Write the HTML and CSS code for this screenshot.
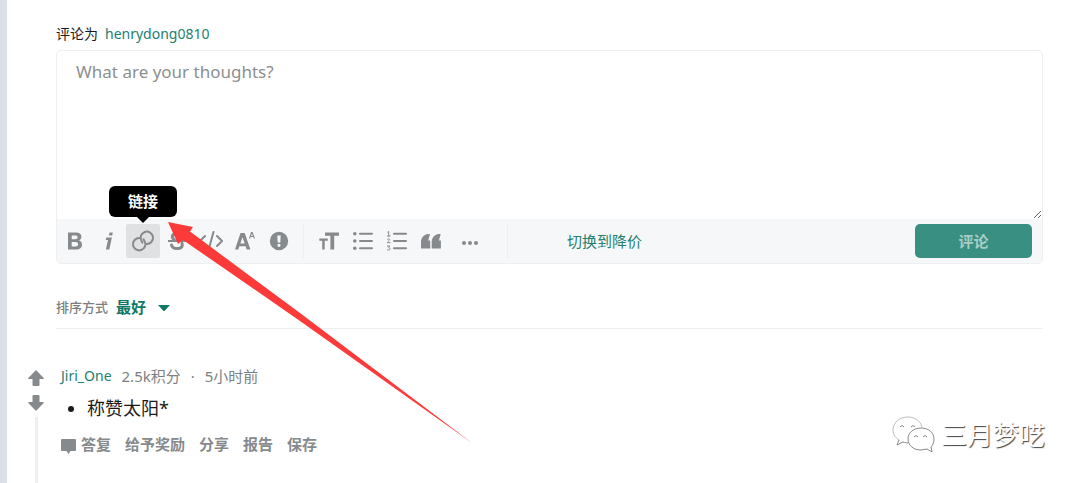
FILE: index.html
```html
<!DOCTYPE html>
<html lang="zh-CN">
<head>
<meta charset="utf-8">
<meta name="viewport" content="width=device-width, initial-scale=1">
<title>评论</title>
<link rel="stylesheet" href="styles.css">
</head>
<body>
<main class="page">
  <form class="composer">
    <div class="composer-label"><label for="comment">评论为</label><a class="user" href="#">henrydong0810</a></div>
    <div class="editor">
      <textarea class="editor-text" id="comment" placeholder="What are your thoughts?"></textarea>
      <div class="toolbar">
        <button class="tool" type="button" aria-label="粗体"><svg viewBox="0 0 20 20"><path fill-rule="evenodd" d="M3 1.500h8c3.600 0 5.400 1.600 5.400 4.300 0 1.800-.9 3-2.400 3.600 1.900.6 3 2.100 3 4.100 0 3.200-2.200 5-5.800 5H3zm3.700 3v3.700h3.600c1.500 0 2.300-.6 2.300-1.900 0-1.200-.8-1.800-2.300-1.800zm0 6.500v4.400h3.900c1.700 0 2.500-.8 2.500-2.200s-.9-2.200-2.600-2.200z"/></svg></button>
        <button class="tool" type="button" aria-label="斜体"><svg viewBox="0 0 20 20"><path d="M10.500 1.500h3.300l-.6 3H9.900zM7.300 6.500h5.600l-2.600 12H6.900l2.100-9.500H6.700z"/></svg></button>
        <button class="tool tool-active" type="button" aria-label="链接"><svg class="link-icon" viewBox="0 0 24 24"><path d="M8.600 9A6.200 6.200 0 1 0 13.500 12L12.600 10.400M15.400 15A6.200 6.200 0 1 0 10.500 12L11.400 13.600"/></svg><span class="tooltip" role="tooltip">链接</span></button>
        <button class="tool" type="button" aria-label="删除线"><svg viewBox="0 0 20 20"><path d="M1 9h18v2H1z"/><path class="line thick" d="M15 5.500C14.500 3.500 12.800 2.500 10.200 2.500 7 2.500 5.300 4 5.300 6c0 1.200.7 2.200 2 2.800M4.500 14c.4 2.200 2.300 3.500 5.600 3.500s5.200-1.500 5.200-3.600c0-.7-.1-1.200-.4-1.700"/></svg></button>
        <button class="tool" type="button" aria-label="行内代码"><svg class="wide-icon" viewBox="0 0 24 20"><path class="line" d="M6 5l-5 5 5 5M18 5l5 5-5 5M14.500 1l-5 18"/></svg></button>
        <button class="tool" type="button" aria-label="上标"><svg viewBox="0 0 20 20"><path fill-rule="evenodd" d="M5.500 2h4.200L15.400 18.500h-3.700l-1.100-3.300H4.400l-1.100 3.300H0zm2 4.200l-2.200 6.300h4.400z"/><path d="M16 1h1.600L20 7.500h-1.200l-.5-1.400h-2.700L15.100 7.500H14zm.9 1.400L16 5h1.800z"/></svg></button>
        <button class="tool" type="button" aria-label="剧透"><svg viewBox="0 0 20 20"><path fill-rule="evenodd" d="M10 .8a9.200 9.200 0 1 0 0 18.400A9.200 9.200 0 0 0 10 .8zM8.300 4.500h3.400l-.4 7H8.700zM10 12.700a1.600 1.600 0 1 1 0 3.200 1.600 1.600 0 0 1 0-3.200z"/></svg></button>
        <span class="divider"></span>
        <button class="tool" type="button" aria-label="标题"><svg viewBox="0 0 20 20"><path d="M6 1.500h14v3.300h-4.800V18.500h-3.800V4.800H6zM.3 7.500h8.500v2.200H5.700v8.800H3.200V9.700H.3z"/></svg></button>
        <button class="tool" type="button" aria-label="项目列表"><svg viewBox="0 0 20 20"><circle cx="1.800" cy="2.700" r="1.800"/><circle cx="1.800" cy="10" r="1.800"/><circle cx="1.800" cy="17.300" r="1.800"/><path class="line" d="M7 2.700h12M7 10h12M7 17.300h12"/></svg></button>
        <button class="tool" type="button" aria-label="编号列表"><svg viewBox="0 0 20 20"><path class="line" d="M7 2.700h12M7 10h12M7 17.300h12"/><path class="line fine" d="M.7 1.100l1-.6V5M.2 5h3M.4 8.400c.4-1 2.300-.8 2.300.2 0 1-2.300 1.800-2.300 3.100h2.800M.4 15h2.400L1.500 16.700c2 0 2 2.400 0 2.400-.6 0-1-.2-1.300-.5"/></svg></button>
        <button class="tool" type="button" aria-label="引用"><svg viewBox="0 0 20 20"><path d="M7 3h2L7.200 9.500h2v8H0v-6C0 7 2.500 3.500 7 3zM17.700 3h2L17.900 9.500h2v8h-9.200v-6c0-4.500 2.500-8 7-8.500z"/></svg></button>
        <button class="tool more" type="button" aria-label="更多"><svg viewBox="0 0 20 20"><circle cx="4" cy="12" r="2"/><circle cx="10" cy="12" r="2"/><circle cx="16" cy="12" r="2"/></svg></button>
        <span class="divider divider-end"></span>
        <button class="switch" type="button">切换到降价</button>
        <button class="submit" type="submit">评论</button>
      </div>
    </div>
  </form>
  <div class="sort">
    <span>排序方式</span>
    <button class="sort-button" type="button">最好 <svg viewBox="0 0 12 6"><path d="M0 0h12L7 5.500q-1 1-2 0z"/></svg></button>
  </div>
  <article class="comment">
    <div class="votes">
      <button class="vote" type="button" aria-label="赞成"><svg viewBox="0 0 16 16"><path d="M8 0l7.700 8q.5 1-.7 1h-3.500v6q0 1-1 1h-5q-1 0-1-1V9H1Q-.2 9 .3 8z"/></svg></button>
      <button class="vote" type="button" aria-label="反对"><svg viewBox="0 0 16 16"><path d="M8 16l7.700-8q.5-1-.7-1h-3.500V1q0-1-1-1h-5q-1 0-1 1v6H1Q-.2 7 .3 8z"/></svg></button>
      <span class="thread"></span>
    </div>
    <div class="comment-body">
      <header class="meta"><a class="user" href="#">Jiri_One</a><span>2.5k积分</span><span>·</span><span>5小时前</span></header>
      <ul class="comment-text"><li>称赞太阳*</li></ul>
      <div class="actions">
        <button type="button"><svg viewBox="0 0 15 15"><path d="M1 0h13q1 0 1 1v10q0 1-1 1H9.500L7.500 15l-2-3H1q-1 0-1-1V1q0-1 1-1z"/></svg>答复</button>
        <button type="button">给予奖励</button>
        <button type="button">分享</button>
        <button type="button">报告</button>
        <button type="button">保存</button>
      </div>
    </div>
  </article>
  <svg class="pointer" viewBox="0 0 306 223" aria-hidden="true"><path d="M0 0L25 5 22 9.500 57 35.500 132 91 304 221 132 99 57 47 15 18 10 22z"/></svg>
  <div class="watermark">
    <svg viewBox="0 0 44 40" aria-hidden="true"><path class="bubble-light" d="M30 12C28 5 22 2 16 2 7 2 1 8 1 15c0 5 3 8 6 10"/><path d="M7 25l-2 5 6-3c2 .7 4 1 5 1M29 13c-8 0-13 5-13 11s5 11 13 11l6-1 5 3-1-5c2-2 3-5 3-8 0-6-5-11-13-11z"/><path d="M8 12q2-3 4 0M19 12q2-3 4 0M22 22q2-3 4 0M31 22q2-3 4 0"/></svg>
    <span>三月梦呓</span>
  </div>
</main>
</body>
</html>
```
FILE: styles.css
```css
* { box-sizing: border-box; }
body {
  margin: 0;
  color: #1a1a1b;
  background: #fff;
  font: 14px/20px "Noto Sans", "Noto Sans CJK SC", sans-serif;
}
button { padding: 0; border: 0; background: none; font: inherit; color: inherit; cursor: pointer; }
svg { display: block; fill: currentColor; }
a { text-decoration: none; }
.page {
  position: relative;
  display: flex;
  flex-direction: column;
  min-height: 100vh;
  padding: 24px 37px 0 49px;
  border-left: 7px solid #dadfe8;
  overflow: hidden;
}
.composer-label { display: flex; gap: 7px; margin-bottom: 6px; }
.user { color: #24806f; }
.editor { border: 1px solid #edeff1; border-radius: 5px; }
.editor-text {
  display: block;
  width: 100%;
  height: 168px;
  padding: 9px 19px;
  border: 0;
  outline: 0;
  resize: vertical;
  background: transparent;
  font: 17px/24px "Noto Sans", sans-serif;
}
.editor-text::placeholder { color: #8c8f91; }
.toolbar {
  display: flex;
  align-items: center;
  height: 44px;
  padding: 0 10px 0 1px;
  background: #f6f7f9;
  color: #878a8c;
}
.tool {
  position: relative;
  display: flex;
  flex: none;
  align-items: center;
  justify-content: center;
  width: 34px;
  height: 34px;
  border-radius: 2px;
}
.tool svg { width: 20px; height: 20px; }
.tool .link-icon { width: 24px; height: 24px; fill: none; stroke: currentColor; stroke-width: 2; stroke-linecap: round; }
.tool .wide-icon { width: 24px; }
.line { fill: none; stroke: currentColor; stroke-width: 2; stroke-linecap: round; }
.thick { stroke-width: 3; }
.fine { stroke-width: 1; }
.tool-active { background: #dfe1e3; }
.tooltip {
  position: absolute;
  bottom: 41px;
  left: 50%;
  width: 68px;
  padding: 5px 0 6px;
  border-radius: 6px;
  transform: translateX(-50%);
  background: #000;
  color: #fff;
  font-size: 15px;
  font-weight: 700;
}
.tooltip::after {
  content: "";
  position: absolute;
  top: 100%;
  left: 50%;
  margin-left: -6px;
  border: 6px solid transparent;
  border-top-color: #000;
}
.divider { flex: none; width: 1px; height: 34px; margin: 0 8px 0 7px; background: #edeff1; }
.divider-end { margin: 0 59px 0 20px; }
.more { margin-left: 5px; }
.switch { color: #24806f; font-size: 15px; }
.submit {
  width: 117px;
  height: 34px;
  margin-left: auto;
  border-radius: 5px;
  background: #399082;
  color: #a7cdc6;
  font-size: 15px;
  font-weight: 700;
}
.sort {
  display: flex;
  align-items: center;
  gap: 8px;
  margin-top: 33px;
  padding-bottom: 11px;
  border-bottom: 1px solid #edeff1;
  color: #7c7f81;
  font-size: 13px;
  font-weight: 500;
}
.sort-button { display: flex; align-items: center; gap: 12px; color: #107868; font-size: 15px; font-weight: 700; }
.sort-button svg { width: 12px; height: 6px; margin-top: 2px; }
.comment { display: flex; flex: 1; gap: 17px; margin: 37px 0 0 -28px; }
.votes { display: flex; flex-direction: column; align-items: center; gap: 9px; padding-top: 4px; color: #878a8c; }
.vote svg { width: 16px; height: 16px; }
.thread { flex: 1; width: 3px; margin-top: -3px; background: #edeff1; }
.meta { display: flex; gap: 10px; color: #7c7f81; }
.meta span { font-size: 15px; }
.comment-text { margin: 10px 0 14px; padding-left: 26px; font-size: 18px; line-height: 24px; }
.actions { display: flex; gap: 14px; color: #878a8c; font-size: 15px; font-weight: 700; }
.actions button { display: flex; align-items: center; gap: 5px; }
.actions svg { width: 15px; height: 15px; margin-top: 4px; }
.pointer { position: absolute; top: 222px; left: 161px; width: 306px; height: 223px; color: #fb3a39; pointer-events: none; }
.watermark {
  position: absolute;
  right: 35px;
  bottom: 28px;
  display: flex;
  align-items: center;
  gap: 5px;
  color: #fff;
  font-size: 26px;
  line-height: 40px;
  text-shadow: 1px 1px 1px #444;
}
.watermark svg { width: 44px; height: 40px; fill: none; stroke: #888; stroke-width: 1; }
.watermark .bubble-light { stroke: #bbb; }
```
